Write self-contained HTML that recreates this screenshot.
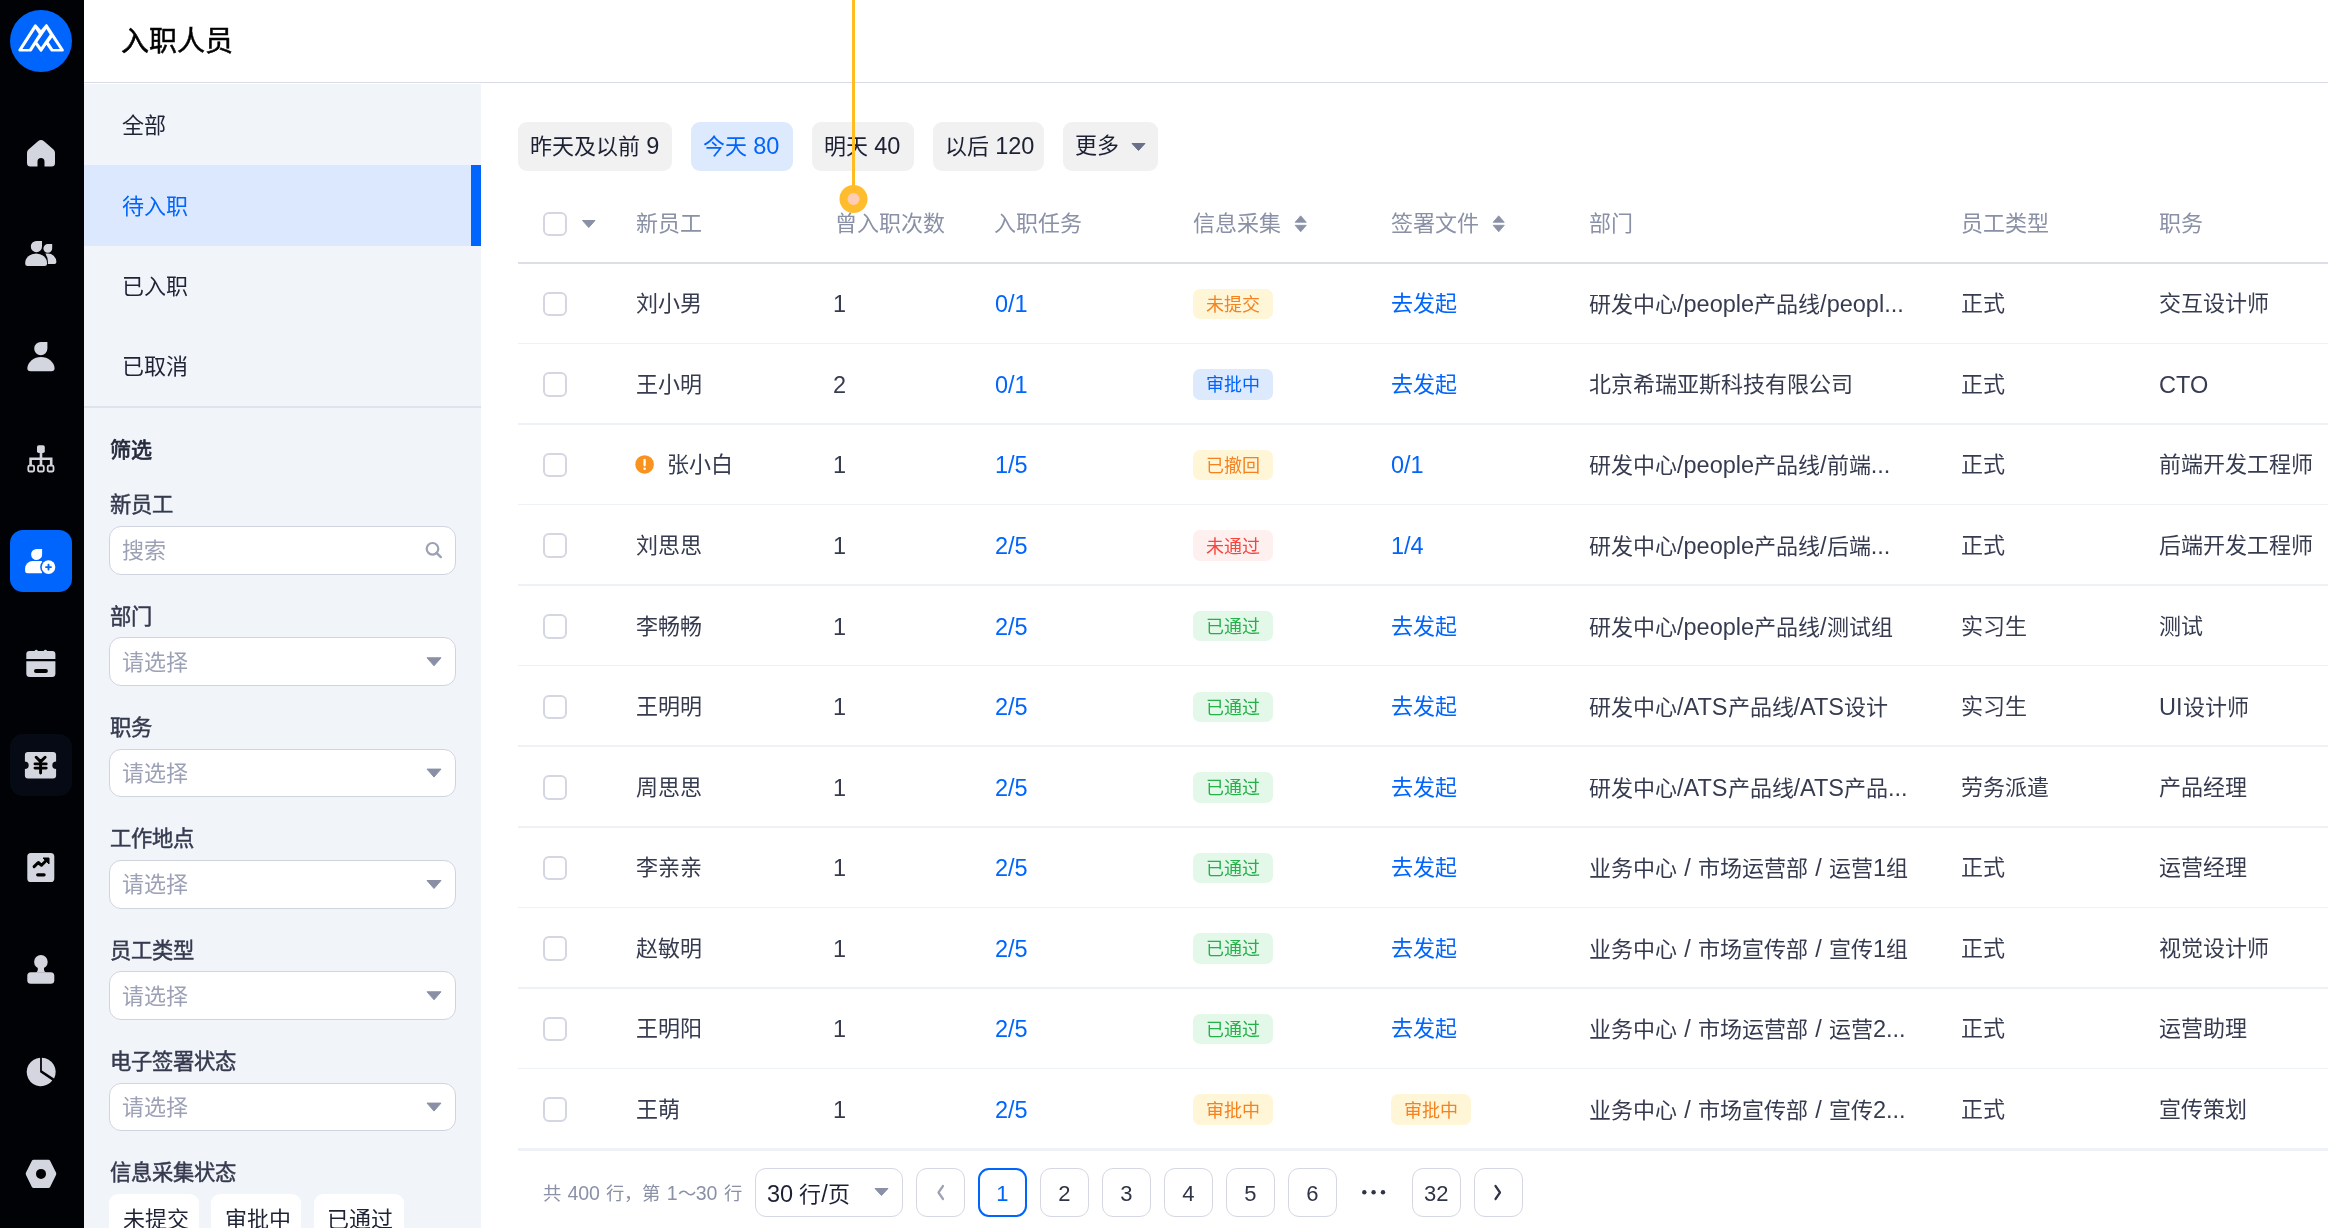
<!DOCTYPE html>
<html lang="zh-CN"><head><meta charset="utf-8"><title>入职人员</title>
<style>
html,body{margin:0;padding:0}
body{width:2328px;height:1228px;overflow:hidden;position:relative;background:#fff;font-family:"Liberation Sans",sans-serif;}
.t{position:absolute;white-space:nowrap;will-change:transform}
.b{position:absolute;box-sizing:border-box}
svg{position:absolute;overflow:visible}
</style></head><body>

<div class="b" style="left:0px;top:0px;width:84px;height:1228px;background:#010205"></div>
<svg style="left:0px;top:0px" width="84" height="84" viewBox="0 0 84 84">
<circle cx="41" cy="41" r="31" fill="#0065fd"/>
<path d="M19.6 50.1 L35.4 25.5 L41 32 L46.4 25.5 L62.6 50.1 L51.6 50.1 L46.4 42.6 L41 50.5 L35.4 42.6 L30.8 50.1 Z" fill="#fff" stroke="#fff" stroke-width="2.6" stroke-linejoin="round"/>
<path d="M22.4 48.9 L35.4 29 L38.8 34.1 L29.2 48.9 Z M37.3 42.3 L46.4 29 L49.8 34.4 L41 47.2 Z M48.7 42.3 L52.2 37.6 L59.9 48.9 L53.1 48.9 Z" fill="#0065fd"/>
</svg>
<svg style="left:0px;top:120px" width="84" height="70" viewBox="0 120 84 70">
<path d="M41 140 Q39.5 140 38 141.3 L28.5 149.5 Q27 150.8 27 153 L27 163 Q27 166.5 30.5 166.5 L37.5 166.5 L37.5 161.5 Q37.5 158 41 158 Q44.5 158 44.5 161.5 L44.5 166.5 L51.5 166.5 Q55 166.5 55 163 L55 153 Q55 150.8 53.5 149.5 L44 141.3 Q42.5 140 41 140 Z" fill="#d4d6df"/>
</svg>
<svg style="left:0px;top:230px" width="84" height="50" viewBox="0 230 84 50">
<path d="M36.5 241 L42 241 L42 246.5 A5.6 5.6 0 1 1 36.5 241 Z" fill="#d4d6df"/>
<path d="M27.7 266 Q25.2 266 25.2 263.5 L25.2 263 A10.8 9.5 0 0 1 47 263 L47 263.5 Q47 266 44.5 266 Z" fill="#d4d6df"/>
<path d="M48 244 L52.2 244 L52.2 248.3 A4.4 4.4 0 1 1 48 244 Z" fill="#d4d6df"/>
<path d="M45.3 253.6 L48 253.6 A8.5 8.5 0 0 1 56.4 262 Q56.4 264 54.4 264 L47.8 264 Q48.5 258 45.3 253.6 Z" fill="#d4d6df"/>
</svg>
<svg style="left:0px;top:330px" width="84" height="50" viewBox="0 330 84 50">
<path d="M41 342 L47.4 342 L47.4 348.5 A6.6 6.6 0 1 1 41 342 Z" fill="#d4d6df"/>
<path d="M27.3 368 A13.7 12 0 0 1 54.6 368 Q54.6 371.2 51.5 371.2 L30.5 371.2 Q27.3 371.2 27.3 368 Z" fill="#d4d6df"/>
</svg>
<svg style="left:0px;top:435px" width="84" height="50" viewBox="0 435 84 50">
<rect x="37" y="445.3" width="7.8" height="7.8" rx="1.8" fill="#d4d6df"/>
<rect x="39.7" y="452" width="2.6" height="14" fill="#d4d6df"/>
<path d="M30.6 465 L30.6 458.8 L51.2 458.8 L51.2 465" fill="none" stroke="#d4d6df" stroke-width="2.6"/>
<rect x="28.3" y="465.7" width="5.8" height="5.8" rx="1.2" fill="none" stroke="#d4d6df" stroke-width="1.8"/>
<rect x="38" y="465.7" width="5.8" height="5.8" rx="1.2" fill="none" stroke="#d4d6df" stroke-width="1.8"/>
<rect x="47.7" y="465.7" width="5.8" height="5.8" rx="1.2" fill="none" stroke="#d4d6df" stroke-width="1.8"/>
</svg>
<div class="b" style="left:10px;top:530px;width:62px;height:62px;background:#0065fd;border-radius:13px"></div>
<svg style="left:0px;top:530px" width="84" height="62" viewBox="0 530 84 62">
<path d="M36.6 549 L42.1 549 L42.1 554.4 A5.5 5.5 0 1 1 36.6 549 Z" fill="#fff"/>
<path d="M27.6 573.2 Q25.1 573.2 25.1 570.7 L25.1 568.5 A7.6 7.6 0 0 1 32.7 560.9 L42 560.9 L42 573.2 Z" fill="#fff"/>
<circle cx="48.5" cy="567.1" r="8.4" fill="#0065fd"/>
<circle cx="48.5" cy="567.1" r="6.8" fill="#fff"/>
<path d="M48.5 564.6 V569.6 M46 567.1 H51" stroke="#0065fd" stroke-width="1.9" stroke-linecap="round"/>
</svg>
<svg style="left:0px;top:640px" width="84" height="50" viewBox="0 640 84 50">
<path d="M29.5 651 L34.5 651 Q36.3 648.5 38 651 L43.6 651 Q45.4 648.5 47.2 651 L52.3 651 Q55.4 651 55.4 654 L55.4 659 L26.3 659 L26.3 654 Q26.3 651 29.5 651 Z" fill="#d4d6df"/>
<path d="M26.3 661.2 L55.4 661.2 L55.4 673.5 Q55.4 677 52 677 L29.8 677 Q26.3 677 26.3 673.5 Z" fill="#d4d6df"/>
<rect x="34" y="669.1" width="13.9" height="3.9" rx="1.95" fill="#000"/>
</svg>
<div class="b" style="left:10px;top:734px;width:62px;height:62px;background:#060a14;border-radius:13px"></div>
<svg style="left:0px;top:745px" width="84" height="45" viewBox="0 745 84 45">
<path d="M28 752 L53 752 Q56.1 752 56.1 755 L56.1 761.5 A3.8 3.8 0 0 0 56.1 769.1 L56.1 775.5 Q56.1 778.5 53 778.5 L28 778.5 Q24.9 778.5 24.9 775.5 L24.9 769.1 A3.8 3.8 0 0 0 24.9 761.5 L24.9 755 Q24.9 752 28 752 Z" fill="#d4d6df"/>
<path d="M36.2 757.2 L40.6 761.6 L45.1 757.2 M35 763.9 H46.2 M35 768.1 H46.2 M40.6 761.6 V773" fill="none" stroke="#000" stroke-width="2.9" stroke-linecap="round" stroke-linejoin="round"/>
</svg>
<svg style="left:0px;top:845px" width="84" height="45" viewBox="0 845 84 45">
<rect x="27.3" y="852.9" width="27" height="29.1" rx="3.6" fill="#d4d6df"/>
<path d="M34.1 866.6 L38.3 862.5 L41.5 865.3 L46.5 860.3" fill="none" stroke="#000" stroke-width="3" stroke-linecap="round" stroke-linejoin="round"/>
<path d="M43 858 L49 858 L49 864 Z" fill="#000" stroke="#000" stroke-width="1" stroke-linejoin="round"/>
<rect x="36.1" y="873.2" width="9.6" height="3.3" rx="1.65" fill="#000"/>
</svg>
<svg style="left:0px;top:945px" width="84" height="45" viewBox="0 945 84 45">
<circle cx="40.9" cy="961.9" r="6.8" fill="#d4d6df"/>
<path d="M37.8 966 L44 966 L44 970 Q44.3 972.4 46.5 972.4 L35.3 972.4 Q37.5 972.4 37.8 970 Z" fill="#d4d6df"/>
<rect x="27.3" y="972.3" width="27" height="11.5" rx="3.5" fill="#d4d6df"/>
</svg>
<svg style="left:0px;top:1050px" width="84" height="45" viewBox="0 1050 84 45">
<path d="M40.1 1057.8 L40.1 1072.3 L52.3 1080.4 A14.2 14.2 0 1 1 40.1 1057.8 Z" fill="#d4d6df"/>
<path d="M41.9 1057.8 A14.2 14.2 0 0 1 54.1 1078.5 L41.9 1070.4 Z" fill="#d4d6df"/>
</svg>
<svg style="left:0px;top:1150px" width="84" height="50" viewBox="0 1150 84 50">
<path d="M33.6 1159.7 L48.4 1159.7 Q49.5 1159.7 50.1 1160.7 L56 1172.6 Q56.6 1173.9 56 1175.1 L50.1 1187 Q49.5 1188 48.4 1188 L33.6 1188 Q32.5 1188 31.9 1187 L26 1175.1 Q25.4 1173.9 26 1172.6 L31.9 1160.7 Q32.5 1159.7 33.6 1159.7 Z M41 1168.9 A5 5 0 1 0 41 1178.9 A5 5 0 1 0 41 1168.9 Z" fill="#d4d6df" fill-rule="evenodd"/>
</svg>
<div class="b" style="left:84px;top:0px;width:2244px;height:83px;background:#fff;border-bottom:1.5px solid #d9dce6"></div>
<div class="t" style="left:121px;top:17.0px;font-size:28px;line-height:50px;color:#000;font-weight:400;-webkit-text-stroke:0.5px #000">入职人员</div>
<div class="b" style="left:84px;top:84px;width:397px;height:1144px;background:#f1f4f9"></div>
<div class="b" style="left:84px;top:165px;width:397px;height:80.5px;background:#dce8fd"></div>
<div class="b" style="left:471px;top:165px;width:10px;height:80.5px;background:#0065fd"></div>
<div class="t" style="left:122px;top:106.0px;font-size:22px;line-height:40px;color:#1f2336;font-weight:400;">全部</div>
<div class="t" style="left:122px;top:186.5px;font-size:22px;line-height:40px;color:#0065fd;font-weight:400;">待入职</div>
<div class="t" style="left:122px;top:267.0px;font-size:22px;line-height:40px;color:#1f2336;font-weight:400;">已入职</div>
<div class="t" style="left:122px;top:347.0px;font-size:22px;line-height:40px;color:#1f2336;font-weight:400;">已取消</div>
<div class="b" style="left:84px;top:406px;width:397px;height:1.5px;background:#dfe3ec"></div>
<div class="t" style="left:109.5px;top:429.5px;font-size:21px;line-height:40px;color:#252a3c;font-weight:400;-webkit-text-stroke:0.75px #252a3c">筛选</div>
<div class="t" style="left:109.5px;top:485.4px;font-size:21.3px;line-height:40px;color:#353a4f;font-weight:400;-webkit-text-stroke:0.45px #353a4f">新员工</div>
<div class="t" style="left:109.5px;top:596.7px;font-size:21.3px;line-height:40px;color:#353a4f;font-weight:400;-webkit-text-stroke:0.45px #353a4f">部门</div>
<div class="t" style="left:109.5px;top:708.0px;font-size:21.3px;line-height:40px;color:#353a4f;font-weight:400;-webkit-text-stroke:0.45px #353a4f">职务</div>
<div class="t" style="left:109.5px;top:819.4px;font-size:21.3px;line-height:40px;color:#353a4f;font-weight:400;-webkit-text-stroke:0.45px #353a4f">工作地点</div>
<div class="t" style="left:109.5px;top:930.7px;font-size:21.3px;line-height:40px;color:#353a4f;font-weight:400;-webkit-text-stroke:0.45px #353a4f">员工类型</div>
<div class="t" style="left:109.5px;top:1042.0px;font-size:21.3px;line-height:40px;color:#353a4f;font-weight:400;-webkit-text-stroke:0.45px #353a4f">电子签署状态</div>
<div class="t" style="left:109.5px;top:1153.4px;font-size:21.3px;line-height:40px;color:#353a4f;font-weight:400;-webkit-text-stroke:0.45px #353a4f">信息采集状态</div>
<div class="b" style="left:109px;top:526px;width:346.5px;height:48.5px;background:#fff;border:1.6px solid #d0d4df;border-radius:12px"></div>
<div class="t" style="left:122px;top:531.3px;font-size:22px;line-height:40px;color:#9ca1b5;font-weight:400;">搜索</div>
<svg style="left:0px;top:0px" width="2" height="2"><circle cx="432.5" cy="548.8" r="5.8" fill="none" stroke="#9ca1b5" stroke-width="2.2"/><path d="M436.8 553.1 L440.8 557.1" stroke="#9ca1b5" stroke-width="2.4" stroke-linecap="round"/></svg>
<div class="b" style="left:109px;top:637.3px;width:346.5px;height:48.5px;background:#fff;border:1.6px solid #d0d4df;border-radius:12px"></div>
<div class="t" style="left:122px;top:642.6px;font-size:22px;line-height:40px;color:#9ca1b5;font-weight:400;">请选择</div>
<svg style="left:0px;top:0px" width="2" height="2"><path d="M427 657.8 L441 657.8 L434 665.8 Z" fill="#8a8fa6" stroke="#8a8fa6" stroke-width="1" stroke-linejoin="round"/></svg>
<div class="b" style="left:109px;top:748.6px;width:346.5px;height:48.5px;background:#fff;border:1.6px solid #d0d4df;border-radius:12px"></div>
<div class="t" style="left:122px;top:753.9px;font-size:22px;line-height:40px;color:#9ca1b5;font-weight:400;">请选择</div>
<svg style="left:0px;top:0px" width="2" height="2"><path d="M427 769.1 L441 769.1 L434 777.1 Z" fill="#8a8fa6" stroke="#8a8fa6" stroke-width="1" stroke-linejoin="round"/></svg>
<div class="b" style="left:109px;top:860px;width:346.5px;height:48.5px;background:#fff;border:1.6px solid #d0d4df;border-radius:12px"></div>
<div class="t" style="left:122px;top:865.3px;font-size:22px;line-height:40px;color:#9ca1b5;font-weight:400;">请选择</div>
<svg style="left:0px;top:0px" width="2" height="2"><path d="M427 880.5 L441 880.5 L434 888.5 Z" fill="#8a8fa6" stroke="#8a8fa6" stroke-width="1" stroke-linejoin="round"/></svg>
<div class="b" style="left:109px;top:971.3px;width:346.5px;height:48.5px;background:#fff;border:1.6px solid #d0d4df;border-radius:12px"></div>
<div class="t" style="left:122px;top:976.6px;font-size:22px;line-height:40px;color:#9ca1b5;font-weight:400;">请选择</div>
<svg style="left:0px;top:0px" width="2" height="2"><path d="M427 991.8 L441 991.8 L434 999.8 Z" fill="#8a8fa6" stroke="#8a8fa6" stroke-width="1" stroke-linejoin="round"/></svg>
<div class="b" style="left:109px;top:1082.6px;width:346.5px;height:48.5px;background:#fff;border:1.6px solid #d0d4df;border-radius:12px"></div>
<div class="t" style="left:122px;top:1087.9px;font-size:22px;line-height:40px;color:#9ca1b5;font-weight:400;">请选择</div>
<svg style="left:0px;top:0px" width="2" height="2"><path d="M427 1103.1 L441 1103.1 L434 1111.1 Z" fill="#8a8fa6" stroke="#8a8fa6" stroke-width="1" stroke-linejoin="round"/></svg>
<div class="b" style="left:109px;top:1194.3px;width:90px;height:50px;background:#fff;border-radius:9px"></div>
<div class="t" style="left:122.5px;top:1199.5px;font-size:22px;line-height:40px;color:#1f2336;font-weight:400;">未提交</div>
<div class="b" style="left:211.3px;top:1194.3px;width:90px;height:50px;background:#fff;border-radius:9px"></div>
<div class="t" style="left:224.8px;top:1199.5px;font-size:22px;line-height:40px;color:#1f2336;font-weight:400;">审批中</div>
<div class="b" style="left:313.6px;top:1194.3px;width:90px;height:50px;background:#fff;border-radius:9px"></div>
<div class="t" style="left:327.1px;top:1199.5px;font-size:22px;line-height:40px;color:#1f2336;font-weight:400;">已通过</div>
<div class="b" style="left:518px;top:122px;width:154px;height:49px;background:#f1f1f2;border-radius:9px"></div>
<div class="t" style="left:529.5px;top:126.0px;font-size:22px;line-height:40px;color:#1c2033;font-weight:400;">昨天及以前 <span style="font-size:23.50px">9</span></div>
<div class="b" style="left:691px;top:122px;width:102px;height:49px;background:#dde9fd;border-radius:9px"></div>
<div class="t" style="left:702.5px;top:126.0px;font-size:22px;line-height:40px;color:#0065fd;font-weight:400;">今天 <span style="font-size:23.50px">80</span></div>
<div class="b" style="left:812px;top:122px;width:102px;height:49px;background:#f1f1f2;border-radius:9px"></div>
<div class="t" style="left:823.5px;top:126.0px;font-size:22px;line-height:40px;color:#1c2033;font-weight:400;">明天 <span style="font-size:23.50px">40</span></div>
<div class="b" style="left:933px;top:122px;width:111px;height:49px;background:#f1f1f2;border-radius:9px"></div>
<div class="t" style="left:944.5px;top:126.0px;font-size:22px;line-height:40px;color:#1c2033;font-weight:400;">以后 <span style="font-size:23.50px">120</span></div>
<div class="b" style="left:1063px;top:122px;width:95px;height:49px;background:#f1f1f2;border-radius:9px"></div>
<div class="t" style="left:1074.5px;top:126.0px;font-size:22px;line-height:40px;color:#1c2033;font-weight:400;">更多</div>
<svg style="left:0px;top:0px" width="2" height="2"><path d="M1132 143.5 L1145 143.5 L1138.5 150.5 Z" fill="#6b7089" stroke="#6b7089" stroke-width="1" stroke-linejoin="round"/></svg>
<div class="b" style="left:542.6px;top:211.70000000000002px;width:24.6px;height:24.6px;background:#fff;border:2px solid #d4d7e1;border-radius:6px"></div>
<svg style="left:0px;top:0px" width="2" height="2"><path d="M582.5 220.5 L595 220.5 L588.75 227.5 Z" fill="#8a90a6" stroke="#8a90a6" stroke-width="1" stroke-linejoin="round"/></svg>
<div class="t" style="left:636px;top:204.3px;font-size:22px;line-height:40px;color:#8a90a6;font-weight:400;">新员工</div>
<div class="t" style="left:835px;top:204.3px;font-size:22px;line-height:40px;color:#8a90a6;font-weight:400;">曾入职次数</div>
<div class="t" style="left:994px;top:204.3px;font-size:22px;line-height:40px;color:#8a90a6;font-weight:400;">入职任务</div>
<div class="t" style="left:1193px;top:204.3px;font-size:22px;line-height:40px;color:#8a90a6;font-weight:400;">信息采集</div>
<div class="t" style="left:1391px;top:204.3px;font-size:22px;line-height:40px;color:#8a90a6;font-weight:400;">签署文件</div>
<div class="t" style="left:1589px;top:204.3px;font-size:22px;line-height:40px;color:#8a90a6;font-weight:400;">部门</div>
<div class="t" style="left:1961px;top:204.3px;font-size:22px;line-height:40px;color:#8a90a6;font-weight:400;">员工类型</div>
<div class="t" style="left:2159px;top:204.3px;font-size:22px;line-height:40px;color:#8a90a6;font-weight:400;">职务</div>
<svg style="left:0px;top:0px" width="2" height="2"><path d="M1295.1000000000001 222.3 L1306.3 222.3 L1300.7 215.8 Z M1295.1000000000001 225.3 L1306.3 225.3 L1300.7 231.8 Z" fill="#8a90a6" stroke="#8a90a6" stroke-width="0.8" stroke-linejoin="round"/></svg>
<svg style="left:0px;top:0px" width="2" height="2"><path d="M1493.1000000000001 222.3 L1504.3 222.3 L1498.7 215.8 Z M1493.1000000000001 225.3 L1504.3 225.3 L1498.7 231.8 Z" fill="#8a90a6" stroke="#8a90a6" stroke-width="0.8" stroke-linejoin="round"/></svg>
<div class="b" style="left:518px;top:262px;width:1810px;height:2px;background:#dcdfe8"></div>
<div class="b" style="left:542.6px;top:291.7px;width:24.6px;height:24.6px;background:#fff;border:2px solid #d4d7e1;border-radius:6px"></div>
<div class="t" style="left:636px;top:284.3px;font-size:22px;line-height:40px;color:#363b50;font-weight:400;">刘小男</div>
<div class="t" style="left:832.5px;top:284.3px;font-size:22px;line-height:40px;color:#363b50;font-weight:400;"><span style="font-size:23.50px">1</span></div>
<div class="t" style="left:995px;top:284.3px;font-size:22px;line-height:40px;color:#0065fd;font-weight:400;"><span style="font-size:23.50px">0/1</span></div>
<div class="b" style="left:1192.5px;top:288.7px;width:80.5px;height:30.5px;background:#fff6d8;border-radius:7px"></div>
<div class="t" style="left:1205.5px;top:284.8px;font-size:18px;line-height:40px;color:#f58220;font-weight:400;">未提交</div>
<div class="t" style="left:1391px;top:284.3px;font-size:22px;line-height:40px;color:#0065fd;font-weight:400;">去发起</div>
<div class="t" style="left:1589px;top:284.3px;font-size:22px;line-height:40px;color:#363b50;font-weight:400;word-spacing:1.1px">研发中心<span style="font-size:23.50px">/people</span>产品线<span style="font-size:23.50px">/peopl...</span></div>
<div class="t" style="left:1961px;top:284.3px;font-size:22px;line-height:40px;color:#363b50;font-weight:400;">正式</div>
<div class="t" style="left:2159px;top:284.3px;font-size:22px;line-height:40px;color:#363b50;font-weight:400;">交互设计师</div>
<div class="b" style="left:518px;top:342.6px;width:1810px;height:1.5px;background:#eef1f6"></div>
<div class="b" style="left:542.6px;top:372.27px;width:24.6px;height:24.6px;background:#fff;border:2px solid #d4d7e1;border-radius:6px"></div>
<div class="t" style="left:636px;top:364.9px;font-size:22px;line-height:40px;color:#363b50;font-weight:400;">王小明</div>
<div class="t" style="left:832.5px;top:364.9px;font-size:22px;line-height:40px;color:#363b50;font-weight:400;"><span style="font-size:23.50px">2</span></div>
<div class="t" style="left:995px;top:364.9px;font-size:22px;line-height:40px;color:#0065fd;font-weight:400;"><span style="font-size:23.50px">0/1</span></div>
<div class="b" style="left:1192.5px;top:369.27px;width:80.5px;height:30.5px;background:#dde9fd;border-radius:7px"></div>
<div class="t" style="left:1205.5px;top:365.4px;font-size:18px;line-height:40px;color:#0065fd;font-weight:400;">审批中</div>
<div class="t" style="left:1391px;top:364.9px;font-size:22px;line-height:40px;color:#0065fd;font-weight:400;">去发起</div>
<div class="t" style="left:1589px;top:364.9px;font-size:22px;line-height:40px;color:#363b50;font-weight:400;word-spacing:1.1px">北京希瑞亚斯科技有限公司</div>
<div class="t" style="left:1961px;top:364.9px;font-size:22px;line-height:40px;color:#363b50;font-weight:400;">正式</div>
<div class="t" style="left:2159px;top:364.9px;font-size:22px;line-height:40px;color:#363b50;font-weight:400;"><span style="font-size:23.50px">CTO</span></div>
<div class="b" style="left:518px;top:423.17px;width:1810px;height:1.5px;background:#eef1f6"></div>
<div class="b" style="left:542.6px;top:452.84px;width:24.6px;height:24.6px;background:#fff;border:2px solid #d4d7e1;border-radius:6px"></div>
<svg style="left:0px;top:0px" width="2" height="2"><circle cx="644.6" cy="464.44" r="9.3" fill="#f7931e"/><path d="M644.6 459.84 V465.24" stroke="#fff" stroke-width="2.3" stroke-linecap="round"/><circle cx="644.6" cy="468.64" r="1.25" fill="#fff"/></svg>
<div class="t" style="left:667px;top:445.4px;font-size:22px;line-height:40px;color:#363b50;font-weight:400;">张小白</div>
<div class="t" style="left:832.5px;top:445.4px;font-size:22px;line-height:40px;color:#363b50;font-weight:400;"><span style="font-size:23.50px">1</span></div>
<div class="t" style="left:995px;top:445.4px;font-size:22px;line-height:40px;color:#0065fd;font-weight:400;"><span style="font-size:23.50px">1/5</span></div>
<div class="b" style="left:1192.5px;top:449.84px;width:80.5px;height:30.5px;background:#fff6d8;border-radius:7px"></div>
<div class="t" style="left:1205.5px;top:445.9px;font-size:18px;line-height:40px;color:#f58220;font-weight:400;">已撤回</div>
<div class="t" style="left:1391px;top:445.4px;font-size:22px;line-height:40px;color:#0065fd;font-weight:400;"><span style="font-size:23.50px">0/1</span></div>
<div class="t" style="left:1589px;top:445.4px;font-size:22px;line-height:40px;color:#363b50;font-weight:400;word-spacing:1.1px">研发中心<span style="font-size:23.50px">/people</span>产品线<span style="font-size:23.50px">/</span>前端<span style="font-size:23.50px">...</span></div>
<div class="t" style="left:1961px;top:445.4px;font-size:22px;line-height:40px;color:#363b50;font-weight:400;">正式</div>
<div class="t" style="left:2159px;top:445.4px;font-size:22px;line-height:40px;color:#363b50;font-weight:400;">前端开发工程师</div>
<div class="b" style="left:518px;top:503.74px;width:1810px;height:1.5px;background:#eef1f6"></div>
<div class="b" style="left:542.6px;top:533.41px;width:24.6px;height:24.6px;background:#fff;border:2px solid #d4d7e1;border-radius:6px"></div>
<div class="t" style="left:636px;top:526.0px;font-size:22px;line-height:40px;color:#363b50;font-weight:400;">刘思思</div>
<div class="t" style="left:832.5px;top:526.0px;font-size:22px;line-height:40px;color:#363b50;font-weight:400;"><span style="font-size:23.50px">1</span></div>
<div class="t" style="left:995px;top:526.0px;font-size:22px;line-height:40px;color:#0065fd;font-weight:400;"><span style="font-size:23.50px">2/5</span></div>
<div class="b" style="left:1192.5px;top:530.41px;width:80.5px;height:30.5px;background:#fff0f0;border-radius:7px"></div>
<div class="t" style="left:1205.5px;top:526.5px;font-size:18px;line-height:40px;color:#f5453d;font-weight:400;">未通过</div>
<div class="t" style="left:1391px;top:526.0px;font-size:22px;line-height:40px;color:#0065fd;font-weight:400;"><span style="font-size:23.50px">1/4</span></div>
<div class="t" style="left:1589px;top:526.0px;font-size:22px;line-height:40px;color:#363b50;font-weight:400;word-spacing:1.1px">研发中心<span style="font-size:23.50px">/people</span>产品线<span style="font-size:23.50px">/</span>后端<span style="font-size:23.50px">...</span></div>
<div class="t" style="left:1961px;top:526.0px;font-size:22px;line-height:40px;color:#363b50;font-weight:400;">正式</div>
<div class="t" style="left:2159px;top:526.0px;font-size:22px;line-height:40px;color:#363b50;font-weight:400;">后端开发工程师</div>
<div class="b" style="left:518px;top:584.31px;width:1810px;height:1.5px;background:#eef1f6"></div>
<div class="b" style="left:542.6px;top:613.9799999999999px;width:24.6px;height:24.6px;background:#fff;border:2px solid #d4d7e1;border-radius:6px"></div>
<div class="t" style="left:636px;top:606.6px;font-size:22px;line-height:40px;color:#363b50;font-weight:400;">李畅畅</div>
<div class="t" style="left:832.5px;top:606.6px;font-size:22px;line-height:40px;color:#363b50;font-weight:400;"><span style="font-size:23.50px">1</span></div>
<div class="t" style="left:995px;top:606.6px;font-size:22px;line-height:40px;color:#0065fd;font-weight:400;"><span style="font-size:23.50px">2/5</span></div>
<div class="b" style="left:1192.5px;top:610.9799999999999px;width:80.5px;height:30.5px;background:#e3f8e8;border-radius:7px"></div>
<div class="t" style="left:1205.5px;top:607.1px;font-size:18px;line-height:40px;color:#26b04a;font-weight:400;">已通过</div>
<div class="t" style="left:1391px;top:606.6px;font-size:22px;line-height:40px;color:#0065fd;font-weight:400;">去发起</div>
<div class="t" style="left:1589px;top:606.6px;font-size:22px;line-height:40px;color:#363b50;font-weight:400;word-spacing:1.1px">研发中心<span style="font-size:23.50px">/people</span>产品线<span style="font-size:23.50px">/</span>测试组</div>
<div class="t" style="left:1961px;top:606.6px;font-size:22px;line-height:40px;color:#363b50;font-weight:400;">实习生</div>
<div class="t" style="left:2159px;top:606.6px;font-size:22px;line-height:40px;color:#363b50;font-weight:400;">测试</div>
<div class="b" style="left:518px;top:664.88px;width:1810px;height:1.5px;background:#eef1f6"></div>
<div class="b" style="left:542.6px;top:694.55px;width:24.6px;height:24.6px;background:#fff;border:2px solid #d4d7e1;border-radius:6px"></div>
<div class="t" style="left:636px;top:687.1px;font-size:22px;line-height:40px;color:#363b50;font-weight:400;">王明明</div>
<div class="t" style="left:832.5px;top:687.1px;font-size:22px;line-height:40px;color:#363b50;font-weight:400;"><span style="font-size:23.50px">1</span></div>
<div class="t" style="left:995px;top:687.1px;font-size:22px;line-height:40px;color:#0065fd;font-weight:400;"><span style="font-size:23.50px">2/5</span></div>
<div class="b" style="left:1192.5px;top:691.55px;width:80.5px;height:30.5px;background:#e3f8e8;border-radius:7px"></div>
<div class="t" style="left:1205.5px;top:687.6px;font-size:18px;line-height:40px;color:#26b04a;font-weight:400;">已通过</div>
<div class="t" style="left:1391px;top:687.1px;font-size:22px;line-height:40px;color:#0065fd;font-weight:400;">去发起</div>
<div class="t" style="left:1589px;top:687.1px;font-size:22px;line-height:40px;color:#363b50;font-weight:400;word-spacing:1.1px">研发中心<span style="font-size:23.50px">/ATS</span>产品线<span style="font-size:23.50px">/ATS</span>设计</div>
<div class="t" style="left:1961px;top:687.1px;font-size:22px;line-height:40px;color:#363b50;font-weight:400;">实习生</div>
<div class="t" style="left:2159px;top:687.1px;font-size:22px;line-height:40px;color:#363b50;font-weight:400;"><span style="font-size:23.50px">UI</span>设计师</div>
<div class="b" style="left:518px;top:745.45px;width:1810px;height:1.5px;background:#eef1f6"></div>
<div class="b" style="left:542.6px;top:775.12px;width:24.6px;height:24.6px;background:#fff;border:2px solid #d4d7e1;border-radius:6px"></div>
<div class="t" style="left:636px;top:767.7px;font-size:22px;line-height:40px;color:#363b50;font-weight:400;">周思思</div>
<div class="t" style="left:832.5px;top:767.7px;font-size:22px;line-height:40px;color:#363b50;font-weight:400;"><span style="font-size:23.50px">1</span></div>
<div class="t" style="left:995px;top:767.7px;font-size:22px;line-height:40px;color:#0065fd;font-weight:400;"><span style="font-size:23.50px">2/5</span></div>
<div class="b" style="left:1192.5px;top:772.12px;width:80.5px;height:30.5px;background:#e3f8e8;border-radius:7px"></div>
<div class="t" style="left:1205.5px;top:768.2px;font-size:18px;line-height:40px;color:#26b04a;font-weight:400;">已通过</div>
<div class="t" style="left:1391px;top:767.7px;font-size:22px;line-height:40px;color:#0065fd;font-weight:400;">去发起</div>
<div class="t" style="left:1589px;top:767.7px;font-size:22px;line-height:40px;color:#363b50;font-weight:400;word-spacing:1.1px">研发中心<span style="font-size:23.50px">/ATS</span>产品线<span style="font-size:23.50px">/ATS</span>产品<span style="font-size:23.50px">...</span></div>
<div class="t" style="left:1961px;top:767.7px;font-size:22px;line-height:40px;color:#363b50;font-weight:400;">劳务派遣</div>
<div class="t" style="left:2159px;top:767.7px;font-size:22px;line-height:40px;color:#363b50;font-weight:400;">产品经理</div>
<div class="b" style="left:518px;top:826.02px;width:1810px;height:1.5px;background:#eef1f6"></div>
<div class="b" style="left:542.6px;top:855.6899999999999px;width:24.6px;height:24.6px;background:#fff;border:2px solid #d4d7e1;border-radius:6px"></div>
<div class="t" style="left:636px;top:848.3px;font-size:22px;line-height:40px;color:#363b50;font-weight:400;">李亲亲</div>
<div class="t" style="left:832.5px;top:848.3px;font-size:22px;line-height:40px;color:#363b50;font-weight:400;"><span style="font-size:23.50px">1</span></div>
<div class="t" style="left:995px;top:848.3px;font-size:22px;line-height:40px;color:#0065fd;font-weight:400;"><span style="font-size:23.50px">2/5</span></div>
<div class="b" style="left:1192.5px;top:852.6899999999999px;width:80.5px;height:30.5px;background:#e3f8e8;border-radius:7px"></div>
<div class="t" style="left:1205.5px;top:848.8px;font-size:18px;line-height:40px;color:#26b04a;font-weight:400;">已通过</div>
<div class="t" style="left:1391px;top:848.3px;font-size:22px;line-height:40px;color:#0065fd;font-weight:400;">去发起</div>
<div class="t" style="left:1589px;top:848.3px;font-size:22px;line-height:40px;color:#363b50;font-weight:400;word-spacing:1.1px">业务中心 <span style="font-size:23.50px">/</span> 市场运营部 <span style="font-size:23.50px">/</span> 运营<span style="font-size:23.50px">1</span>组</div>
<div class="t" style="left:1961px;top:848.3px;font-size:22px;line-height:40px;color:#363b50;font-weight:400;">正式</div>
<div class="t" style="left:2159px;top:848.3px;font-size:22px;line-height:40px;color:#363b50;font-weight:400;">运营经理</div>
<div class="b" style="left:518px;top:906.59px;width:1810px;height:1.5px;background:#eef1f6"></div>
<div class="b" style="left:542.6px;top:936.2599999999999px;width:24.6px;height:24.6px;background:#fff;border:2px solid #d4d7e1;border-radius:6px"></div>
<div class="t" style="left:636px;top:928.9px;font-size:22px;line-height:40px;color:#363b50;font-weight:400;">赵敏明</div>
<div class="t" style="left:832.5px;top:928.9px;font-size:22px;line-height:40px;color:#363b50;font-weight:400;"><span style="font-size:23.50px">1</span></div>
<div class="t" style="left:995px;top:928.9px;font-size:22px;line-height:40px;color:#0065fd;font-weight:400;"><span style="font-size:23.50px">2/5</span></div>
<div class="b" style="left:1192.5px;top:933.2599999999999px;width:80.5px;height:30.5px;background:#e3f8e8;border-radius:7px"></div>
<div class="t" style="left:1205.5px;top:929.4px;font-size:18px;line-height:40px;color:#26b04a;font-weight:400;">已通过</div>
<div class="t" style="left:1391px;top:928.9px;font-size:22px;line-height:40px;color:#0065fd;font-weight:400;">去发起</div>
<div class="t" style="left:1589px;top:928.9px;font-size:22px;line-height:40px;color:#363b50;font-weight:400;word-spacing:1.1px">业务中心 <span style="font-size:23.50px">/</span> 市场宣传部 <span style="font-size:23.50px">/</span> 宣传<span style="font-size:23.50px">1</span>组</div>
<div class="t" style="left:1961px;top:928.9px;font-size:22px;line-height:40px;color:#363b50;font-weight:400;">正式</div>
<div class="t" style="left:2159px;top:928.9px;font-size:22px;line-height:40px;color:#363b50;font-weight:400;">视觉设计师</div>
<div class="b" style="left:518px;top:987.16px;width:1810px;height:1.5px;background:#eef1f6"></div>
<div class="b" style="left:542.6px;top:1016.8299999999998px;width:24.6px;height:24.6px;background:#fff;border:2px solid #d4d7e1;border-radius:6px"></div>
<div class="t" style="left:636px;top:1009.4px;font-size:22px;line-height:40px;color:#363b50;font-weight:400;">王明阳</div>
<div class="t" style="left:832.5px;top:1009.4px;font-size:22px;line-height:40px;color:#363b50;font-weight:400;"><span style="font-size:23.50px">1</span></div>
<div class="t" style="left:995px;top:1009.4px;font-size:22px;line-height:40px;color:#0065fd;font-weight:400;"><span style="font-size:23.50px">2/5</span></div>
<div class="b" style="left:1192.5px;top:1013.8299999999998px;width:80.5px;height:30.5px;background:#e3f8e8;border-radius:7px"></div>
<div class="t" style="left:1205.5px;top:1009.9px;font-size:18px;line-height:40px;color:#26b04a;font-weight:400;">已通过</div>
<div class="t" style="left:1391px;top:1009.4px;font-size:22px;line-height:40px;color:#0065fd;font-weight:400;">去发起</div>
<div class="t" style="left:1589px;top:1009.4px;font-size:22px;line-height:40px;color:#363b50;font-weight:400;word-spacing:1.1px">业务中心 <span style="font-size:23.50px">/</span> 市场运营部 <span style="font-size:23.50px">/</span> 运营<span style="font-size:23.50px">2...</span></div>
<div class="t" style="left:1961px;top:1009.4px;font-size:22px;line-height:40px;color:#363b50;font-weight:400;">正式</div>
<div class="t" style="left:2159px;top:1009.4px;font-size:22px;line-height:40px;color:#363b50;font-weight:400;">运营助理</div>
<div class="b" style="left:518px;top:1067.73px;width:1810px;height:1.5px;background:#eef1f6"></div>
<div class="b" style="left:542.6px;top:1097.4px;width:24.6px;height:24.6px;background:#fff;border:2px solid #d4d7e1;border-radius:6px"></div>
<div class="t" style="left:636px;top:1090.0px;font-size:22px;line-height:40px;color:#363b50;font-weight:400;">王萌</div>
<div class="t" style="left:832.5px;top:1090.0px;font-size:22px;line-height:40px;color:#363b50;font-weight:400;"><span style="font-size:23.50px">1</span></div>
<div class="t" style="left:995px;top:1090.0px;font-size:22px;line-height:40px;color:#0065fd;font-weight:400;"><span style="font-size:23.50px">2/5</span></div>
<div class="b" style="left:1192.5px;top:1094.4px;width:80.5px;height:30.5px;background:#fff6d8;border-radius:7px"></div>
<div class="t" style="left:1205.5px;top:1090.5px;font-size:18px;line-height:40px;color:#f58220;font-weight:400;">审批中</div>
<div class="b" style="left:1390.5px;top:1094.4px;width:80.5px;height:30.5px;background:#fff6d8;border-radius:7px"></div>
<div class="t" style="left:1403.5px;top:1090.5px;font-size:18px;line-height:40px;color:#f58220;font-weight:400;">审批中</div>
<div class="t" style="left:1589px;top:1090.0px;font-size:22px;line-height:40px;color:#363b50;font-weight:400;word-spacing:1.1px">业务中心 <span style="font-size:23.50px">/</span> 市场宣传部 <span style="font-size:23.50px">/</span> 宣传<span style="font-size:23.50px">2...</span></div>
<div class="t" style="left:1961px;top:1090.0px;font-size:22px;line-height:40px;color:#363b50;font-weight:400;">正式</div>
<div class="t" style="left:2159px;top:1090.0px;font-size:22px;line-height:40px;color:#363b50;font-weight:400;">宣传策划</div>
<div class="b" style="left:518px;top:1148.3px;width:1810px;height:2.5px;background:#eef1f6"></div>
<div class="t" style="left:543px;top:1172.5px;font-size:18.3px;line-height:40px;color:#8a90a6;font-weight:400;word-spacing:1.3px">共 <span style="font-size:19.55px">400</span> 行，第 <span style="font-size:19.55px">1</span>～<span style="font-size:19.55px">30</span> 行</div>
<div class="b" style="left:755px;top:1168.3px;width:147.5px;height:48.5px;background:#fff;border:1.5px solid #d5d8e3;border-radius:11px"></div>
<div class="t" style="left:767.3px;top:1173.5px;font-size:22px;line-height:40px;color:#1c2033;font-weight:400;"><span style="font-size:23.50px">30</span> 行<span style="font-size:23.50px">/</span>页</div>
<svg style="left:0px;top:0px" width="2" height="2"><path d="M875 1188.5 L888 1188.5 L881.5 1195.5 Z" fill="#8a90a6" stroke="#8a90a6" stroke-width="1" stroke-linejoin="round"/></svg>
<div class="b" style="left:916px;top:1168.3px;width:48.5px;height:48.5px;background:#fff;border:1.5px solid #d5d8e3;border-radius:11px"></div>
<svg style="left:0px;top:0px" width="2" height="2"><path d="M943 1186 L938.5 1192.5 L943 1199" fill="none" stroke="#9ca1b5" stroke-width="2.2" stroke-linecap="round" stroke-linejoin="round"/></svg>
<div class="b" style="left:978px;top:1168.3px;width:48.5px;height:48.5px;background:#fff;border:2px solid #0065fd;border-radius:11px"></div>
<div class="t" style="left:978px;width:48.5px;text-align:center;top:1173.5px;line-height:40px;font-size:22px;color:#0065fd">1</div>
<div class="b" style="left:1040px;top:1168.3px;width:48.5px;height:48.5px;background:#fff;border:1.5px solid #d5d8e3;border-radius:11px"></div>
<div class="t" style="left:1040px;width:48.5px;text-align:center;top:1173.5px;line-height:40px;font-size:22px;color:#2f3447">2</div>
<div class="b" style="left:1102px;top:1168.3px;width:48.5px;height:48.5px;background:#fff;border:1.5px solid #d5d8e3;border-radius:11px"></div>
<div class="t" style="left:1102px;width:48.5px;text-align:center;top:1173.5px;line-height:40px;font-size:22px;color:#2f3447">3</div>
<div class="b" style="left:1164px;top:1168.3px;width:48.5px;height:48.5px;background:#fff;border:1.5px solid #d5d8e3;border-radius:11px"></div>
<div class="t" style="left:1164px;width:48.5px;text-align:center;top:1173.5px;line-height:40px;font-size:22px;color:#2f3447">4</div>
<div class="b" style="left:1226px;top:1168.3px;width:48.5px;height:48.5px;background:#fff;border:1.5px solid #d5d8e3;border-radius:11px"></div>
<div class="t" style="left:1226px;width:48.5px;text-align:center;top:1173.5px;line-height:40px;font-size:22px;color:#2f3447">5</div>
<div class="b" style="left:1288px;top:1168.3px;width:48.5px;height:48.5px;background:#fff;border:1.5px solid #d5d8e3;border-radius:11px"></div>
<div class="t" style="left:1288px;width:48.5px;text-align:center;top:1173.5px;line-height:40px;font-size:22px;color:#2f3447">6</div>
<svg style="left:0px;top:0px" width="2" height="2"><circle cx="1364.3" cy="1192.3" r="2.2" fill="#2f3447"/><circle cx="1373.6" cy="1192.3" r="2.2" fill="#2f3447"/><circle cx="1383" cy="1192.3" r="2.2" fill="#2f3447"/></svg>
<div class="b" style="left:1412px;top:1168.3px;width:48.5px;height:48.5px;background:#fff;border:1.5px solid #d5d8e3;border-radius:11px"></div>
<div class="t" style="left:1412px;width:48.5px;text-align:center;top:1173.5px;line-height:40px;font-size:22px;color:#2f3447">32</div>
<div class="b" style="left:1474px;top:1168.3px;width:48.5px;height:48.5px;background:#fff;border:1.5px solid #d5d8e3;border-radius:11px"></div>
<svg style="left:0px;top:0px" width="2" height="2"><path d="M1495.5 1186 L1500 1192.5 L1495.5 1199" fill="none" stroke="#2f3447" stroke-width="2.2" stroke-linecap="round" stroke-linejoin="round"/></svg>
<div class="b" style="left:852px;top:0px;width:3px;height:192px;background:#ffbd22"></div>
<svg style="left:0px;top:0px" width="2" height="2"><circle cx="853.5" cy="199" r="14" fill="#ffbd2e"/><circle cx="853.5" cy="199" r="6" fill="#ffcdb3"/></svg>
</body></html>
